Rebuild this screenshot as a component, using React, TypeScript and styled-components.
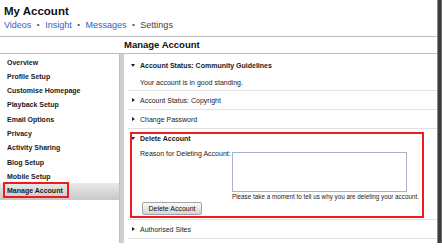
import React from 'react';
import styled, { createGlobalStyle, css } from 'styled-components';

const Global = createGlobalStyle`
  html, body { margin: 0; padding: 0; background: #fff; }
  body { font-family: "Liberation Sans", Arial, sans-serif; color: #222; }
  * { box-sizing: border-box; }
`;

const Frame = styled.div`
  position: relative;
  width: 437px;
  height: 243px;
  overflow: hidden;
  background: #fff;
  display: flex;
  flex-direction: column;
  box-shadow: 0 0 0 1px #8a8a8a, 0 0 0 4px #3c3c3c, 0 0 0 5px #6a6a6a;
`;

const Masthead = styled.header`
  height: 37px;
  padding: 4px 0 0 4px;
  border-bottom: 1px solid #bdbdbd;
`;

const Title = styled.h1`
  margin: 0;
  font-size: 11.5px;
  line-height: 14px;
  font-weight: bold;
  color: #111;
`;

const Nav = styled.nav`
  margin-top: 1px;
  display: flex;
  align-items: center;
  font-size: 9px;
  line-height: 12px;
`;

const NavLink = styled.a<{ $current?: boolean }>`
  color: ${(p) => (p.$current ? '#444' : '#3060cc')};
  text-decoration: none;
`;

const Dot = styled.span`
  color: #555;
  font-size: 8px;
  margin: 0 5.5px;
`;

const SectionHead = styled.div`
  height: 17px;
  padding-left: 124px;
  border-bottom: 1px solid #bdbdbd;
  font-size: 9.5px;
  line-height: 16px;
  font-weight: bold;
  color: #111;
`;

const Body = styled.div`
  flex: 1;
  display: flex;
  min-height: 0;
`;

const Sidebar = styled.ul`
  width: 119px;
  margin: 0;
  padding: 1.5px 0 0;
  list-style: none;
`;

const SideItem = styled.li<{ $active?: boolean }>`
  position: relative;
  padding-left: 7px;
  font-size: 7px;
  font-weight: bold;
  line-height: 14.33px;
  color: #1a1a1a;
  white-space: nowrap;
  ${(p) =>
    p.$active &&
    css`
      padding-top: 1px;
      padding-bottom: 1px;
      margin: -1px 0;
      background: linear-gradient(#e9e9e9, #c8c8c8);
    `}
`;

const Divider = styled.div`
  width: 5px;
  background: linear-gradient(to right, #b9b9b9, #d2d2d2 40%, #cdcdcd);
`;

const Content = styled.div`
  flex: 1;
  padding: 2px 0 0 4px;
`;

const Row = styled.div`
  position: relative;
  border-bottom: 1px solid #e2e2e2;
`;

const RowHead = styled.div<{ $bold?: boolean }>`
  height: 18px;
  display: flex;
  align-items: center;
  font-size: 7px;
  font-weight: ${(p) => (p.$bold ? 'bold' : 'normal')};
  color: #1a1a1a;
`;

const ArrowSlot = styled.span`
  width: 12px;
  padding-left: 3px;
  display: flex;
  align-items: center;
`;

const Arrow = styled.span<{ $open?: boolean }>`
  width: 0;
  height: 0;
  ${(p) =>
    p.$open
      ? css`
          border-left: 2.5px solid transparent;
          border-right: 2.5px solid transparent;
          border-top: 3px solid #222;
        `
      : css`
          margin-left: 0.5px;
          border-top: 2.5px solid transparent;
          border-bottom: 2.5px solid transparent;
          border-left: 3px solid #222;
        `}
`;

const RowText = styled.div`
  padding: 2px 0 0 12px;
  height: 16px;
  font-size: 7px;
  line-height: 14px;
  color: #222;
`;

const Form = styled.div`
  margin-top: 3px;
  padding: 0 0 4px 12px;
  display: grid;
  grid-template-columns: 92px auto;
  align-items: start;
`;

const Label = styled.label`
  font-size: 7px;
  line-height: 8px;
  color: #222;
  white-space: nowrap;
`;

const Field = styled.div`
  display: flex;
  flex-direction: column;
`;

const TextArea = styled.textarea`
  margin: 2px 0 0;
  width: 175px;
  height: 40px;
  border: 1px solid #a7b2c4;
  padding: 0;
  resize: none;
  background: #fff;
  outline: none;
`;

const Help = styled.div`
  font-size: 6.3px;
  line-height: 9px;
  color: #222;
  white-space: nowrap;
`;

const Button = styled.button`
  grid-column: 1 / -1;
  justify-self: start;
  margin: 1px 0 0 2px;
  width: 60px;
  height: 13px;
  padding: 0;
  border: 1px solid #a4a4a4;
  border-radius: 2px;
  background: linear-gradient(#fafafa, #e4e4e4 60%, #d6d6d6);
  font-family: "Liberation Sans", Arial, sans-serif;
  font-size: 7px;
  line-height: 11px;
  color: #111;
`;

const Annotation = styled.div<{ $top: number; $left: number; $w: number; $h: number }>`
  position: absolute;
  top: ${(p) => p.$top}px;
  left: ${(p) => p.$left}px;
  width: ${(p) => p.$w}px;
  height: ${(p) => p.$h}px;
  border: 2px solid #ee1c1c;
  pointer-events: none;
`;

const sideItems = [
  'Overview',
  'Profile Setup',
  'Customise Homepage',
  'Playback Setup',
  'Email Options',
  'Privacy',
  'Activity Sharing',
  'Blog Setup',
  'Mobile Setup',
  'Manage Account',
];

const navItems = ['Videos', 'Insight', 'Messages', 'Settings'];

export default function App() {
  return (
    <>
      <Global />
      <Frame>
        <Masthead>
          <Title>My Account</Title>
          <Nav>
            {navItems.map((n, i) => (
              <React.Fragment key={n}>
                {i > 0 && <Dot>•</Dot>}
                <NavLink $current={n === 'Settings'}>{n}</NavLink>
              </React.Fragment>
            ))}
          </Nav>
        </Masthead>
        <SectionHead>Manage Account</SectionHead>
        <Body>
          <Sidebar>
            {sideItems.map((s) => (
              <SideItem key={s} $active={s === 'Manage Account'}>
                {s}
                {s === 'Manage Account' && <Annotation $top={-1} $left={3} $w={66} $h={16} />}
              </SideItem>
            ))}
          </Sidebar>
          <Divider />
          <Content>
            <Row>
              <RowHead $bold>
                <ArrowSlot><Arrow $open /></ArrowSlot>
                Account Status: Community Guidelines
              </RowHead>
              <RowText>Your account is in good standing.</RowText>
            </Row>
            <Row>
              <RowHead>
                <ArrowSlot><Arrow /></ArrowSlot>
                Account Status: Copyright
              </RowHead>
            </Row>
            <Row>
              <RowHead>
                <ArrowSlot><Arrow /></ArrowSlot>
                Change Password
              </RowHead>
            </Row>
            <Row>
              <RowHead $bold>
                <ArrowSlot><Arrow $open /></ArrowSlot>
                Delete Account
              </RowHead>
              <Form>
                <Label>Reason for Deleting Account:</Label>
                <Field>
                  <TextArea />
                  <Help>Please take a moment to tell us why you are deleting your account.</Help>
                </Field>
                <Button>Delete Account</Button>
              </Form>
              <Annotation $top={3} $left={2} $w={294} $h={86} />
            </Row>
            <Row>
              <RowHead>
                <ArrowSlot><Arrow /></ArrowSlot>
                Authorised Sites
              </RowHead>
            </Row>
          </Content>
        </Body>
      </Frame>
    </>
  );
}
